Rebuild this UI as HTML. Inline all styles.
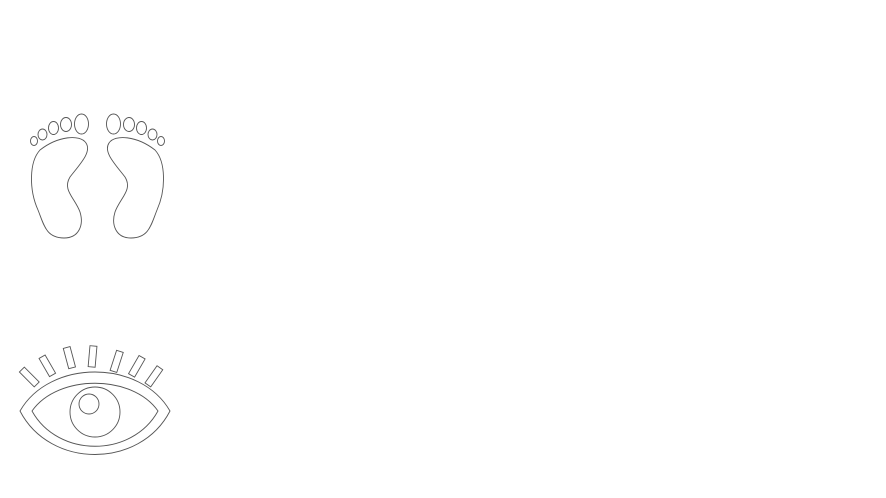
<!DOCTYPE html>
<html><head><style>html,body{margin:0;padding:0;background:#fff;width:886px;height:498px;overflow:hidden}</style></head>
<body>
<svg width="886" height="498" viewBox="0 0 886 498" style="position:absolute;left:0;top:0">
<g fill="none" stroke="#555" stroke-width="0.9">
<g id="lf">
<ellipse cx="34" cy="141" rx="3.5" ry="4.5"/>
<ellipse cx="42.5" cy="134.5" rx="4.5" ry="5.5"/>
<ellipse cx="53.5" cy="128" rx="5" ry="6.5"/>
<ellipse cx="66" cy="124.5" rx="5.5" ry="7"/>
<ellipse cx="81.5" cy="124" rx="7" ry="10"/>
<path d="M40,150 C29,162 29,190 38,210 C44,225 46,238 64,238 C79,238 84,225 80,212 C75,198 62,190 70,177 C80,164 92,152 86,143 C80,134 58,136 40,150 Z"/>
</g>
<use href="#lf" transform="translate(195,0) scale(-1,1)"/>
<path d="M20,411 C50,359 140,359 170,411 C140,469 50,469 20,411 Z"/>
<path d="M32,411 C58,374 132,374 158,411 C132,458 58,458 32,411 Z"/>
<circle cx="95" cy="412" r="25"/>
<circle cx="89" cy="404" r="10"/>
<rect x="26" y="366" width="7" height="21" transform="rotate(-45 30 377)"/>
<rect x="44" y="355" width="7" height="21" transform="rotate(-30 48 366)"/>
<rect x="66" y="347" width="7" height="21" transform="rotate(-15 70 358)"/>
<rect x="89" y="346" width="7" height="21" transform="rotate(5 93 357)"/>
<rect x="113" y="351" width="7" height="21" transform="rotate(18 117 362)"/>
<rect x="133" y="356" width="7" height="21" transform="rotate(30 137 367)"/>
<rect x="150" y="366" width="7" height="21" transform="rotate(35 154 377)"/>
</g>
</svg>
</body></html>
